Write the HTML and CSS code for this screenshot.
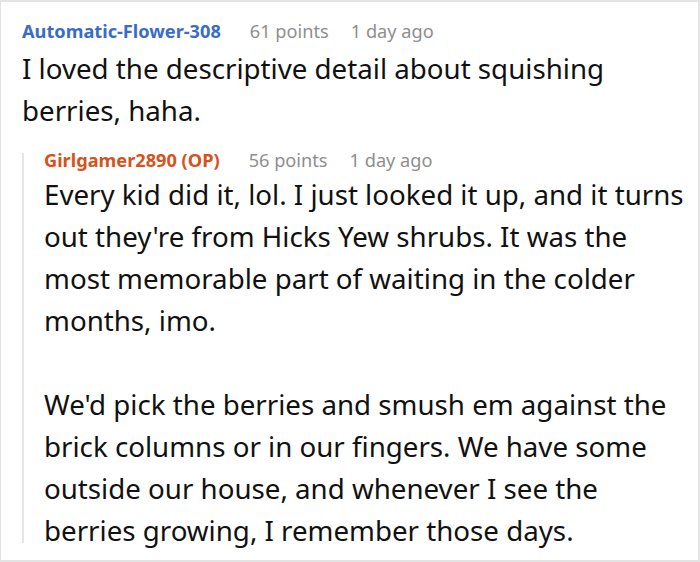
FILE: index.html
```html
<!DOCTYPE html>
<html>
<head>
<meta charset="utf-8">
<link rel="stylesheet" href="styles.css">
</head>
<body>
<div class="thread">
  <div class="comment">
    <div class="meta"><span class="author">Automatic-Flower-308</span><span class="points">61 points</span><span class="time">1 day ago</span></div>
    <div class="body main-body">
      <p>I loved the descriptive detail about squishing berries, haha.</p>
    </div>
    <div class="replies">
      <div class="comment reply">
        <div class="meta reply-meta"><span class="author op">Girlgamer2890 (OP)</span><span class="points">56 points</span><span class="time">1 day ago</span></div>
        <div class="body reply-body">
          <p>Every kid did it, lol. I just looked it up, and it turns<br>out they're from Hicks Yew shrubs. It was the<br>most memorable part of waiting in the colder<br>months, imo.</p>
          <p>We'd pick the berries and smush em against the<br>brick columns or in our fingers. We have some<br>outside our house, and whenever I see the<br>berries growing, I remember those days.</p>
        </div>
      </div>
    </div>
  </div>
</div>
</body>
</html>
```

FILE: styles.css
```css
html, body {
  margin: 0;
  padding: 0;
  background: #ffffff;
}
.thread {
  box-sizing: border-box;
  width: 700px;
  height: 562px;
  border: 2px solid #e3e3e3;
  border-left-width: 1px;
  background: #fff;
  padding: 16px 0 0 21px;
  overflow: hidden;
  font-family: "Noto Sans", "Open Sans", sans-serif;
}
.meta {
  font-size: 18.2px;
  line-height: 26px;
  display: flex;
  align-items: baseline;
}
.author {
  font-weight: 700;
  color: #3a6cc6;
}
.author.op {
  color: #d6521d;
}
.points {
  color: #8e8e8e;
  margin-left: 29px;
}
.time {
  color: #8e8e8e;
  margin-left: 22px;
}
.body {
  font-size: 27.7px;
  line-height: 42px;
  color: #111;
}
.main-body {
  margin-top: 3px;
}
.body p {
  margin: 0 0 42px 0;
}
.main-body p:last-child {
  margin-bottom: 0;
}
.reply-body p:last-child {
  margin-bottom: -8px;
}
.replies {
  display: flow-root;
  margin-top: 22px;
  border-left: 2px solid #e6e6e6;
  padding-left: 20px;
}
.reply-meta {
  line-height: 14px;
  margin-bottom: 6px;
}
```
